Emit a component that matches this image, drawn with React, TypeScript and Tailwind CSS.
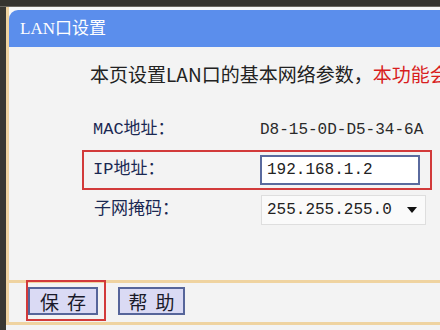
import React from 'react';

const cjk = '"Noto Sans CJK SC", sans-serif';

const App: React.FC = () => {
  return (
    <div
      className="w-[440px] h-[330px] overflow-hidden flex flex-col bg-[#f3f3f3]"
      style={{ fontFamily: `"Liberation Mono", ${cjk}` }}
    >
      <div className="h-[7px] shrink-0 bg-[#36342f] border-b border-[#6b6760]" />
      <div className="flex flex-1 min-h-0">
        <div className="w-[6px] shrink-0 bg-[#3a3833]" />
        <div className="flex-1 flex flex-col pb-[5px]">
          <div className="flex-1 flex flex-col border-l-[3px] border-b-[3px] border-[#efd3a0] bg-[#f3f3f3]">
            {/* header */}
            <div className="pt-[3px] bg-[#f8f8f8]">
              <div
                className="h-[37px] bg-[#5b8eec] rounded-tl-[9px] pl-[11px] flex items-center text-white text-[17px] whitespace-nowrap"
                style={{ fontFamily: `"Liberation Serif", ${cjk}` }}
              >
                LAN口设置
              </div>
            </div>

            {/* body */}
            <div className="flex-1 flex flex-col">
              <div className="pt-[17px] pl-[81px] text-[19px] leading-[20px] whitespace-nowrap text-[#222]" style={{ fontFamily: cjk }}>
                本页设置LAN口的基本网络参数，<span className="text-[#d81e1e]">本功能会</span>
              </div>

              <div className="mt-[26px] ml-[73px] flex flex-col text-[17px] text-[#1a2852]">
                <div className="h-[40px] w-[350px] border-2 border-transparent flex items-center pl-[9px]">
                  <span className="w-[167px] shrink-0">MAC地址：</span>
                  <span className="text-[16px] text-[#2a2a2a]">D8-15-0D-D5-34-6A</span>
                </div>
                <div className="h-[40px] w-[350px] border-2 border-[#d23a3a] flex items-center pl-[9px]">
                  <span className="w-[167px] shrink-0">IP地址：</span>
                  <div className="w-[160px] h-[30px] bg-white border-2 border-[#5a6a9e] flex items-center pl-[5px] text-[16px] text-[#222]">
                    192.168.1.2
                  </div>
                </div>
                <div className="h-[40px] w-[350px] border-2 border-transparent flex items-center pl-[10px]">
                  <span className="w-[167px] shrink-0">子网掩码：</span>
                  <div className="w-[165px] h-[30px] bg-[#fafafa] border border-[#dedede] flex items-center justify-between pl-[5px] pr-[8px] text-[16px] text-[#222]">
                    <span>255.255.255.0</span>
                    <span className="w-0 h-0 border-l-[5px] border-r-[5px] border-t-[6px] border-l-transparent border-r-transparent border-t-[#111]" />
                  </div>
                </div>
              </div>
            </div>

            {/* footer */}
            <div className="h-[42px] border-t-[3px] border-[#efd3a0] pl-[19px] pt-[4px] flex items-start gap-[20px]" style={{ fontFamily: cjk }}>
              <div className="relative">
                <button className="w-[70px] h-[28px] bg-[#dadaf4] border-2 border-[#56659a] text-[19px] leading-none text-[#1a1a2a] flex items-center justify-center gap-[8px]">
                  <span>保</span>
                  <span>存</span>
                </button>
                <div className="absolute left-[-2px] right-[-8px] top-[-7px] bottom-[-6px] border-2 border-[#d23a3a]" />
              </div>
              <button className="w-[67px] h-[28px] bg-[#dadaf4] border-2 border-[#56659a] text-[19px] leading-none text-[#1a1a2a] flex items-center justify-center gap-[8px]">
                <span>帮</span>
                <span>助</span>
              </button>
            </div>
          </div>
        </div>
      </div>
    </div>
  );
};

export default App;
